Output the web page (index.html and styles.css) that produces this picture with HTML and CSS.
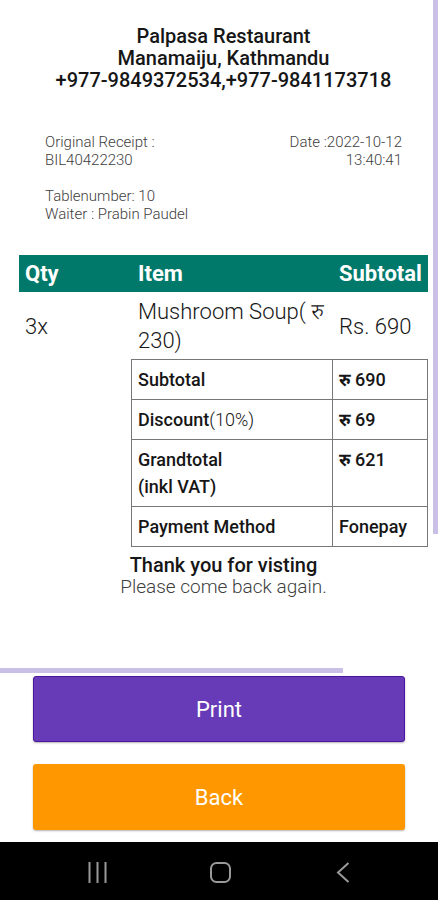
FILE: index.html
```html
<!DOCTYPE html>
<html lang="en">
<head>
  <meta charset="utf-8">
  <meta name="viewport" content="width=device-width, initial-scale=1">
  <title>Receipt</title>
  <link rel="stylesheet" href="styles.css">
</head>
<body>
  <main class="screen">
    <section class="receipt">
      <header class="shop">
        <div>Palpasa Restaurant</div>
        <div>Manamaiju, Kathmandu</div>
        <div>+977-9849372534,+977-9841173718</div>
      </header>

      <div class="meta">
        <div>
          <p>Original Receipt :<br>BIL40422230</p>
          <p>Tablenumber: 10<br>Waiter : Prabin Paudel</p>
        </div>
        <p class="date">Date :2022-10-12<br>13:40:41</p>
      </div>

      <table class="items">
        <thead>
          <tr><th class="qty">Qty</th><th>Item</th><th class="price">Subtotal</th></tr>
        </thead>
        <tbody>
          <tr><td>3x</td><td>Mushroom Soup( रु 230)</td><td class="price">Rs. 690</td></tr>
        </tbody>
      </table>

      <table class="totals">
        <tbody>
          <tr><th scope="row">Subtotal</th><td><b>रु</b> 690</td></tr>
          <tr><th scope="row">Discount<span class="light">(10%)</span></th><td><b>रु</b> 69</td></tr>
          <tr><th scope="row">Grandtotal<br>(inkl VAT)</th><td><b>रु</b> 621</td></tr>
          <tr><th scope="row">Payment Method</th><td>Fonepay</td></tr>
        </tbody>
      </table>

      <footer class="thanks">
        <div class="thanks-title">Thank you for visting</div>
        <div>Please come back again.</div>
      </footer>

      <div class="thumb thumb-y"></div>
      <div class="thumb thumb-x"></div>
    </section>

    <div class="actions">
      <button class="btn btn-print" type="button">Print</button>
      <button class="btn btn-back" type="button">Back</button>
    </div>

    <nav class="navbar">
      <button type="button" aria-label="Recent apps">
        <svg width="24" height="24" viewBox="0 0 24 24"><path d="M3.500 2v21M11.500 2v21M19.500 2v21"/></svg>
      </button>
      <button type="button" aria-label="Home">
        <svg width="24" height="24" viewBox="0 0 24 24"><rect x="2" y="3" width="19" height="19" rx="5.500"/></svg>
      </button>
      <button type="button" aria-label="Go back">
        <svg width="24" height="24" viewBox="0 0 24 24"><path d="M17.500 3L7 12.500l10.500 9.500"/></svg>
      </button>
    </nav>
  </main>
</body>
</html>
```
FILE: styles.css
```css
* {
  box-sizing: border-box;
}

body {
  margin: 0;
  background: #fff;
  color: #161616;
  font-family: Roboto, "Noto Sans Devanagari", "Noto Sans", sans-serif;
}

p {
  margin: 0;
}

button {
  border: 0;
  padding: 0;
  font: inherit;
}

.screen {
  display: flex;
  flex-direction: column;
  min-height: 100vh;
}

.receipt {
  position: relative;
  flex: 1;
  padding: 25px 10px 0 19px;
}

.shop {
  text-align: center;
  font-size: 20px;
  font-weight: 500;
  line-height: 22px;
}

.meta {
  display: flex;
  justify-content: space-between;
  padding: 42px 26px 0;
  color: #404040;
  font-size: 15px;
  font-weight: 300;
  line-height: 18px;
}

.meta p + p {
  margin-top: 18px;
}

.date {
  text-align: right;
}

table {
  border-collapse: collapse;
}

.items {
  width: 100%;
  margin-top: 32px;
  table-layout: fixed;
  font-size: 22px;
  font-weight: 300;
  line-height: 29px;
}

.items th {
  padding: 4px 6px;
  background: #00796b;
  color: #fff;
  font-weight: 700;
  text-align: left;
}

.items td {
  padding: 5px 6px 4px;
}

.items .qty {
  width: 113px;
}

.items .price {
  width: 95px;
  padding-right: 0;
  white-space: nowrap;
}

.totals {
  width: calc(100% - 112px);
  margin-left: auto;
  table-layout: fixed;
  font-size: 18px;
  font-weight: 500;
  line-height: 27px;
}

.totals th,
.totals td {
  padding: 6px;
  border: 1px solid #777;
  font-weight: 500;
  text-align: left;
  vertical-align: top;
}

.totals td {
  width: 95px;
}

.totals b {
  font-weight: 700;
}

.totals .light {
  font-weight: 300;
}

.thanks {
  padding-top: 7px;
  text-align: center;
  color: #404040;
  font-size: 19px;
  font-weight: 300;
  line-height: 22px;
}

.thanks-title {
  color: #161616;
  font-size: 20px;
  font-weight: 500;
}

.thumb {
  position: absolute;
  background: #cabfe6;
}

.thumb-y {
  top: 0;
  right: 0;
  width: 5px;
  height: 534px;
}

.thumb-x {
  bottom: 0;
  left: 0;
  width: 343px;
  height: 5px;
}

.actions {
  display: flex;
  flex-direction: column;
  gap: 22px;
  padding: 3px 33px 12px;
}

.btn {
  height: 66px;
  border-radius: 3px;
  color: #fff;
  font-size: 22px;
  box-shadow: 0 1px 2px rgba(0, 0, 0, 0.3);
}

.btn-print {
  border: 1px solid #4a169d;
  background: #673ab7;
}

.btn-back {
  background: #ff9800;
}

.navbar {
  display: flex;
  justify-content: space-between;
  align-items: center;
  height: 58px;
  padding: 2px 83px 0 86px;
  background: #000;
}

.navbar button {
  height: 24px;
  background: none;
}

.navbar svg {
  display: block;
  fill: none;
  stroke: #999;
  stroke-width: 2;
}
```
